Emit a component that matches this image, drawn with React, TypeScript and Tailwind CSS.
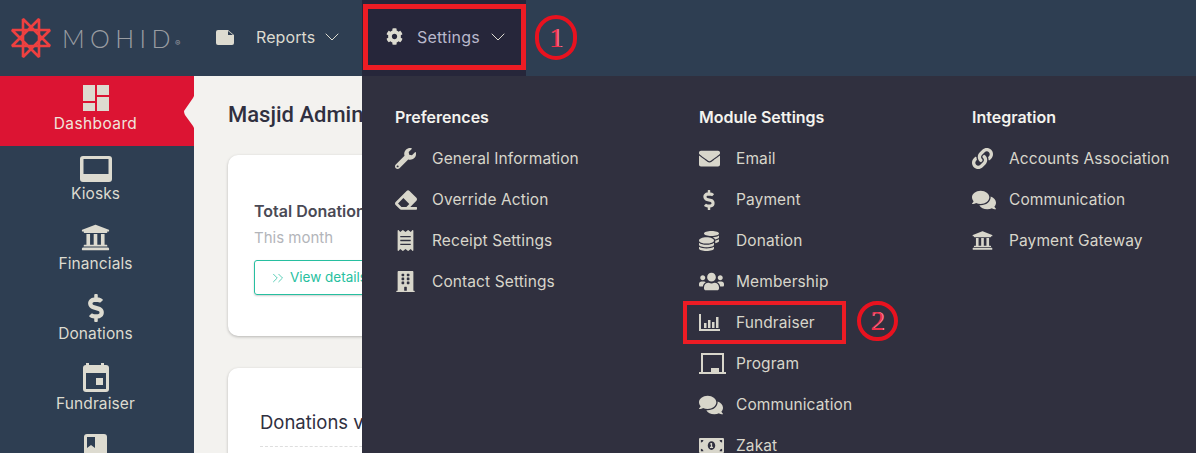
import React from "react";
import { FaCog, FaWrench, FaEraser, FaReceipt, FaBuilding, FaEnvelope, FaDollarSign, FaCoins, FaUsers, FaComments, FaMoneyBillAlt, FaLink, FaUniversity } from "react-icons/fa";
import { ChevronDown, ChevronsRight } from "lucide-react";

const font = "font-['Inter','Noto_Sans',sans-serif]";

function Logo() {
  return (
    <svg width="42" height="42" viewBox="0 0 42 42" fill="none" stroke="#ee4040" strokeWidth="2.6" strokeLinejoin="miter" strokeMiterlimit="2">
      <path d="M40 29 L2 29 L29 2 L29 40 L2 13 L40 13 L13 40 L13 2 Z" />
    </svg>
  );
}

function NoteIcon() {
  return (
    <svg width="18" height="15" viewBox="0 0 18 15" className="mt-[-2px]">
      <path d="M2 0 H12 L18 5 V13 Q18 15 16 15 H2 Q0 15 0 13 V2 Q0 0 2 0 Z" fill="#dddbd0" />
      <path d="M12 1 L17 5 H12 Z" fill="#2e3e52" />
    </svg>
  );
}

function Tile() {
  return (
    <svg width="26" height="26" viewBox="0 0 26 26" fill="#dddbd0">
      <rect x="0" y="0" width="12" height="16" />
      <rect x="0" y="18" width="12" height="8" />
      <rect x="14" y="0" width="12" height="10" />
      <rect x="14" y="12" width="12" height="14" />
    </svg>
  );
}

function Screen() {
  return (
    <svg width="32" height="26" viewBox="0 0 32 26">
      <rect x="0" y="0" width="32" height="26" rx="3" fill="#dddbd0" />
      <rect x="3.5" y="3" width="25" height="15" fill="#2e3e52" />
    </svg>
  );
}

function Calendar() {
  return (
    <svg width="26" height="29" viewBox="0 0 26 29">
      <rect x="0" y="2" width="26" height="27" rx="3" fill="#dddbd0" />
      <rect x="3" y="0" width="3" height="5" fill="#dddbd0" />
      <rect x="18" y="0" width="3" height="5" fill="#dddbd0" />
      <rect x="3" y="10" width="20" height="16" fill="#2e3e52" />
      <rect x="13" y="15" width="7" height="7" fill="#dddbd0" />
    </svg>
  );
}

function Book() {
  return (
    <svg width="23" height="28" viewBox="0 0 23 28">
      <rect x="0" y="0" width="23" height="28" rx="3" fill="#dddbd0" />
      <path d="M3 3 H11 V14 L7 11 L3 14 Z" fill="#2e3e52" />
    </svg>
  );
}

function ChartIcon() {
  return (
    <svg width="21" height="17" viewBox="0 0 21 17" fill="#d8d6cb">
      <rect x="0" y="0" width="2" height="17" />
      <rect x="0" y="15" width="21" height="2" />
      <rect x="5" y="9" width="2.5" height="5" />
      <rect x="9" y="6" width="2.5" height="8" />
      <rect x="13" y="8" width="2.5" height="6" />
      <rect x="17" y="3" width="2.5" height="11" />
    </svg>
  );
}

function BoardIcon() {
  return (
    <svg width="27" height="21" viewBox="0 0 27 21" fill="#d8d6cb">
      <path d="M2 0 H25 V19 H23 V2 H4 V19 H2 Z" />
      <rect x="0" y="19" width="27" height="2" />
      <rect x="12" y="15" width="8" height="4" />
    </svg>
  );
}

const side = [
  { label: "Kiosks", icon: <Screen /> },
  { label: "Financials", icon: <FaUniversity size={29} color="#dddbd0" /> },
  { label: "Donations", icon: <FaDollarSign size={28} color="#dddbd0" /> },
  { label: "Fundraiser", icon: <Calendar /> },
];

const I = 20;
const cols = [
  {
    title: "Preferences",
    w: "w-[304px]",
    items: [
      ["General Information", <FaWrench size={I + 1} />],
      ["Override Action", <FaEraser size={I + 2} />],
      ["Receipt Settings", <FaReceipt size={I + 1} />],
      ["Contact Settings", <FaBuilding size={I + 1} />],
    ],
  },
  {
    title: "Module Settings",
    w: "w-[273px]",
    items: [
      ["Email", <FaEnvelope size={I + 1} />],
      ["Payment", <FaDollarSign size={I} />],
      ["Donation", <FaCoins size={I} />],
      ["Membership", <FaUsers size={I + 5} />],
      ["Fundraiser", <ChartIcon />],
      ["Program", <BoardIcon />],
      ["Communication", <FaComments size={I + 4} />],
      ["Zakat", <FaMoneyBillAlt size={I + 5} />],
    ],
  },
  {
    title: "Integration",
    w: "flex-1",
    items: [
      ["Accounts Association", <FaLink size={I + 1} />],
      ["Communication", <FaComments size={I + 4} />],
      ["Payment Gateway", <FaUniversity size={I + 1} />],
    ],
  },
] as const;

function Badge({ n, cls }: { n: string; cls: string }) {
  return (
    <div className={`absolute flex items-center justify-center rounded-full border-[4px] border-[#e8121f] font-['Liberation_Serif',serif] text-[#f0304a] [text-shadow:1px_0_0_#f58aa0] ${cls}`}>
      {n}
    </div>
  );
}

export default function App() {
  return (
    <div className={`relative flex h-[453px] w-[1196px] flex-col overflow-hidden bg-[#f3f2ef] ${font}`}>
      <header className="flex h-[76px] shrink-0 items-center bg-[#2e3e52]">
        <div className="flex w-[216px] items-center pl-[10px]">
          <Logo />
          <span className="ml-[10px] font-['Lato',sans-serif] text-[25px] font-light leading-none tracking-[5.4px] text-[#9a9da2]">MOHID</span>
          <span className="ml-[-1px] mt-[9px] text-[8px] text-[#9a9da2]">®</span>
        </div>
        <div className="flex w-[146px] items-center text-[#dddbd0]">
          <NoteIcon />
          <span className="ml-[22px] mt-[-3px] text-[16px] leading-[22px] tracking-[0.1px]">Reports</span>
          <ChevronDown size={24} strokeWidth={1} className="ml-[5px] mt-[-2px]" />
        </div>
        <div className="flex h-full w-[164px] items-center bg-[#26263a] pl-[24px] text-[#dddbd0]">
          <FaCog size={17} className="mt-[-4px]" />
          <span className="ml-[14px] mt-[-3px] text-[16px] leading-[22px] tracking-[0.2px] text-[#b9b8cc]">Settings</span>
          <ChevronDown size={24} strokeWidth={1} className="ml-[6px] mt-[-2px]" />
        </div>
      </header>

      <div className="flex min-h-0 flex-1">
        <aside className="flex w-[194px] shrink-0 flex-col bg-[#2e3e52] text-[#dddbd0]">
          <div className="relative flex h-[70px] shrink-0 flex-col items-center bg-[#dc1433] pr-[3px] pt-[9px] text-[#f0e4dc]">
            <Tile />
            <span className="mt-[3px] text-[15.5px] leading-[20px] tracking-[0.4px]">Dashboard</span>
            <svg className="absolute right-0 top-[20px]" width="10" height="32" viewBox="0 0 10 32" fill="#f3f2ef">
              <path d="M10 0 L9 2 L0 15 Q0 17 1 19 L9 30 L10 32 Z" />
            </svg>
          </div>
          {side.map((s) => (
            <div key={s.label} className="flex h-[70px] shrink-0 flex-col items-center justify-end pb-[12px] pr-[3px]">
              <div className="flex h-[30px] items-end justify-center">{s.icon}</div>
              <span className="mt-[2px] text-[15.5px] leading-[20px] tracking-[0.1px]">{s.label}</span>
            </div>
          ))}
          <div className="flex shrink-0 justify-center pr-[3px] pt-[8px]">
            <Book />
          </div>
        </aside>
        <main className="min-w-0 flex-1 pl-[34px] pt-[25px]">
          <h1 className="whitespace-nowrap font-['Roboto',sans-serif] text-[22px] font-medium leading-[28px] text-[#30303f]">Masjid Admin</h1>
          <section className="mt-[26px] h-[181px] w-[400px] rounded-[10px] bg-white px-[26px] pt-[46px] shadow-[0_1px_3px_rgba(0,0,0,0.25)]">
            <p className="whitespace-nowrap text-[16px] font-semibold leading-[20px] text-[#4a4a55]">Total Donations</p>
            <p className="mt-[7px] text-[15px] leading-[20px] text-[#b3b5ba]">This month</p>
            <button className="mt-[12px] flex h-[35px] items-center rounded-[3px] border border-[#27bfa0] pl-[14px] pr-[20px] text-[13.5px] text-[#27bfa0] shadow-[0_1px_2px_rgba(0,0,0,0.2)]">
              <ChevronsRight size={18} strokeWidth={1} />
              <span className="ml-[3px] whitespace-nowrap">View details</span>
            </button>
          </section>
          <section className="mt-[32px] h-[200px] w-[400px] rounded-[10px] bg-white px-[32px] pt-[43px] shadow-[0_1px_3px_rgba(0,0,0,0.25)]">
            <p className="whitespace-nowrap border-b border-dashed border-[#dedede] pb-[13px] text-[18.5px] leading-[22px] text-[#30303f]">Donations vs Goals</p>
          </section>
        </main>
      </div>

      <nav className="absolute bottom-0 left-[362px] right-0 top-[76px] flex bg-[#30303f] pl-[33px] pt-[30px]">
        {cols.map((c) => (
          <div key={c.title} className={c.w}>
            <h3 className="text-[16px] font-semibold leading-[22px] text-[#f4f3ee]">{c.title}</h3>
            <ul className="mt-[10px]">
              {c.items.map(([label, icon]) => (
                <li key={label as string} className="flex h-[41px] items-center text-[#d8d6cb]">
                  <span className="flex w-[37px] shrink-0 items-center">{icon}</span>
                  <span className="whitespace-nowrap text-[15.5px] leading-[15px] tracking-[0.1px]">{label as string}</span>
                </li>
              ))}
            </ul>
          </div>
        ))}
      </nav>

      <div className="absolute left-[363px] top-[4px] h-[66px] w-[163px] border-[5px] border-[#ed1c24]" />
      <Badge n="1" cls="left-[535px] top-[15px] h-[45px] w-[42px] text-[28px]" />
      <div className="absolute left-[683px] top-[301px] h-[43px] w-[163px] border-[4px] border-[#ed1c24]" />
      <Badge n="2" cls="left-[857px] top-[301px] h-[40px] w-[41px] text-[28px]" />
    </div>
  );
}
